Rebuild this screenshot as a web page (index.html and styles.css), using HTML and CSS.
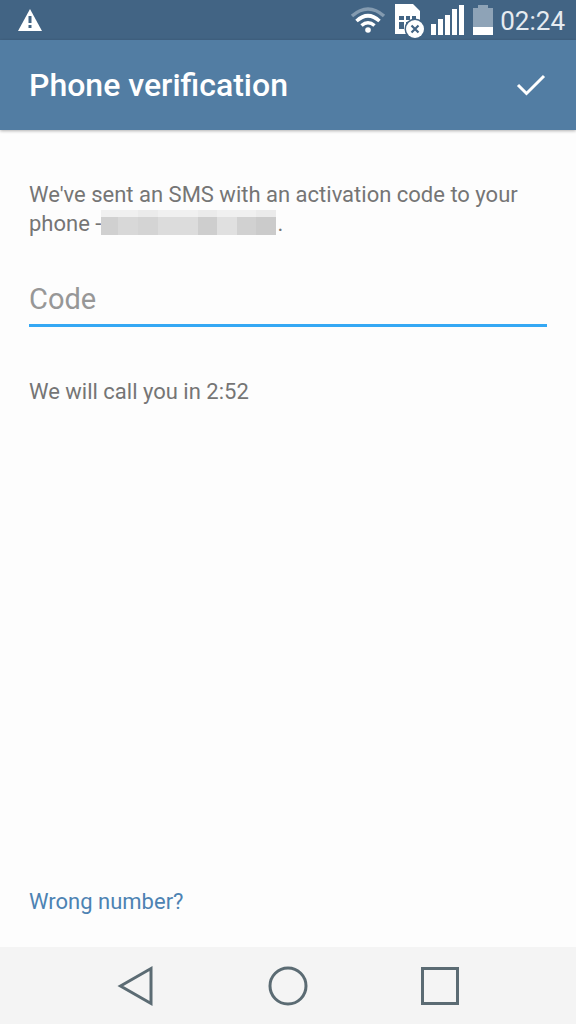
FILE: index.html
```html
<!DOCTYPE html>
<html lang="en">
<head>
<meta charset="utf-8">
<meta name="viewport" content="width=device-width, initial-scale=1">
<title>Phone verification</title>
<link rel="stylesheet" href="styles.css">
</head>
<body>
<div class="status">
  <svg class="status-alert" width="26" height="24" viewBox="0 0 26 24" aria-hidden="true">
    <path d="M13 1 25 23H1Z" fill="#fff"/>
    <path d="M11.5 8h3v7h-3zM11.5 17h3v3h-3z" fill="#426484"/>
  </svg>
  <svg class="status-wifi" width="36" height="28" viewBox="0 0 36 28" fill="none" stroke-width="3.6" aria-hidden="true">
    <path d="M2 10Q18 -4 34 10" stroke="#849bb0"/>
    <path d="M6.5 15Q18 4.500 29.500 15M11.500 19.500Q18 14 24.500 19.500" stroke="#fff"/>
    <circle cx="18" cy="24" r="2.800" fill="#fff"/>
  </svg>
  <svg class="status-sim" width="32" height="36" viewBox="0 0 32 36" aria-hidden="true">
    <path d="M2 2h18l7 7v23H2Z" fill="#fff"/>
    <path d="M6 14h5v4H6zM13 14h4v4h-4zM19 14h4v4h-4zM6 20h5v7H6zM13 20h4v7h-4z" fill="#426484"/>
    <path d="M11 22h2v2h-2z" fill="#fff"/>
    <circle cx="22" cy="27" r="10.500" fill="#426484"/>
    <circle cx="22" cy="27" r="9" fill="#fff"/>
    <path d="m18.500 23.500 7 7m0-7-7 7" stroke="#426484" stroke-width="2.200"/>
  </svg>
  <svg class="status-signal" width="34" height="32" viewBox="0 0 34 32" fill="#fff" aria-hidden="true">
    <path d="M0 20h5v11H0zM7 15h5v16H7zM14 11h5v20h-5zM21 5h5v26h-5zM28 1h5v30h-5z"/>
  </svg>
  <svg class="status-battery" width="20" height="32" viewBox="0 0 20 32" aria-hidden="true">
    <path d="M5 1h10v3h5v19H0V4h5z" fill="#8ea3b7"/>
    <path d="M0 23h20v8H0z" fill="#fff"/>
  </svg>
  <time class="clock">02:24</time>
</div>
<header class="bar">
  <h1 class="title">Phone verification</h1>
  <button class="done" type="submit" form="verify" aria-label="Done">
    <svg width="32" height="26" viewBox="0 0 32 26" fill="none" stroke="#fff" stroke-width="3" aria-hidden="true"><path d="m3 13 8.500 8.500L29 4"/></svg>
  </button>
</header>
<main class="content">
  <form id="verify">
    <p class="text">We've sent an SMS with an activation code to your phone -<svg class="redacted" width="175" height="25" viewBox="0 0 175 25" role="img" aria-label="hidden number" shape-rendering="crispEdges">
      <path d="M0 0h175v7H0z" fill="#f0f0f0"/>
      <path d="M37 0h20v7H37zM97 0h19v7H97zM155 0h20v7h-20z" fill="#ebebeb"/>
      <path d="M0 7h17v18H0z" fill="#d0d0d0"/>
      <path d="M17 7h20v18H17z" fill="#d8d8d8"/>
      <path d="M37 7h20v18H37z" fill="#d4d4d4"/>
      <path d="M57 7h40v18H57z" fill="#dcdcdc"/>
      <path d="M97 7h19v18H97z" fill="#cecece"/>
      <path d="M116 7h20v18h-20z" fill="#e0e0e0"/>
      <path d="M136 7h19v18h-19z" fill="#d1d1d1"/>
      <path d="M155 7h20v18h-20z" fill="#cbcbcb"/>
    </svg>.</p>
    <input class="code" type="text" inputmode="numeric" placeholder="Code" aria-label="Code">
    <p class="text">We will call you in 2:52</p>
  </form>
  <a class="wrong" href="#">Wrong number?</a>
</main>
<nav class="nav" aria-label="System">
  <button class="nav-button" type="button" aria-label="Back"><svg width="40" height="42" viewBox="0 0 40 42"><path d="M4.500 21 35 3.500v35Z"/></svg></button>
  <button class="nav-button" type="button" aria-label="Home"><svg width="42" height="42" viewBox="0 0 42 42"><circle cx="21" cy="21" r="18"/></svg></button>
  <button class="nav-button" type="button" aria-label="Recent apps"><svg width="42" height="42" viewBox="0 0 42 42"><path d="M3.500 3.500h35v35h-35z"/></svg></button>
</nav>
</body>
</html>
```
FILE: styles.css
```css
* {
  box-sizing: border-box;
}

body {
  margin: 0;
  min-height: 100vh;
  display: flex;
  flex-direction: column;
  background: #fdfdfd;
  color: #757575;
  font-family: Roboto, "Liberation Sans", sans-serif;
  font-size: 22px;
  line-height: 29px;
}

svg {
  flex: none;
}

button {
  border: 0;
  padding: 0;
  background: none;
}

.status {
  display: flex;
  align-items: center;
  height: 40px;
  padding: 0 11px 0 17px;
  background: #426484;
}

.status-wifi {
  margin-left: auto;
}

.status-sim {
  margin-left: 7px;
}

.status-signal {
  margin-left: 6px;
}

.status-battery {
  margin-left: 8px;
}

.clock {
  margin-left: 7px;
  padding-top: 2px;
  color: #e6ebf0;
  font-size: 26px;
}

.bar {
  display: flex;
  align-items: center;
  justify-content: space-between;
  height: 90px;
  padding: 0 29px;
  background: #527da3;
  box-shadow: 0 1px 3px rgba(0, 0, 0, 0.3);
}

.title {
  margin: 0;
  color: #fff;
  font-size: 32px;
  font-weight: 500;
  line-height: 40px;
}

.done {
  display: flex;
}

.content {
  flex: 1;
  display: flex;
  flex-direction: column;
  justify-content: space-between;
  align-items: stretch;
  padding: 50px 29px 31px;
}

.text {
  margin: 0;
}

.redacted {
  margin-right: 1px;
  vertical-align: -4px;
}

.code {
  display: block;
  width: 100%;
  height: 54px;
  margin: 35px 0 50px;
  padding: 0;
  border: 0;
  border-bottom: 3px solid #35a8f4;
  border-radius: 0;
  outline: 0;
  background: none;
  color: #212121;
  font: inherit;
  font-size: 29px;
}

.code::placeholder {
  color: #979797;
  opacity: 1;
}

.wrong {
  align-self: flex-start;
  color: #4d83b3;
  text-decoration: none;
}

.nav {
  display: flex;
  justify-content: center;
  align-items: center;
  height: 77px;
  background: #f4f4f4;
}

.nav-button {
  display: flex;
  justify-content: center;
  width: 152px;
}

.nav-button svg {
  fill: none;
  stroke: #5b6b73;
  stroke-width: 3;
}
```
